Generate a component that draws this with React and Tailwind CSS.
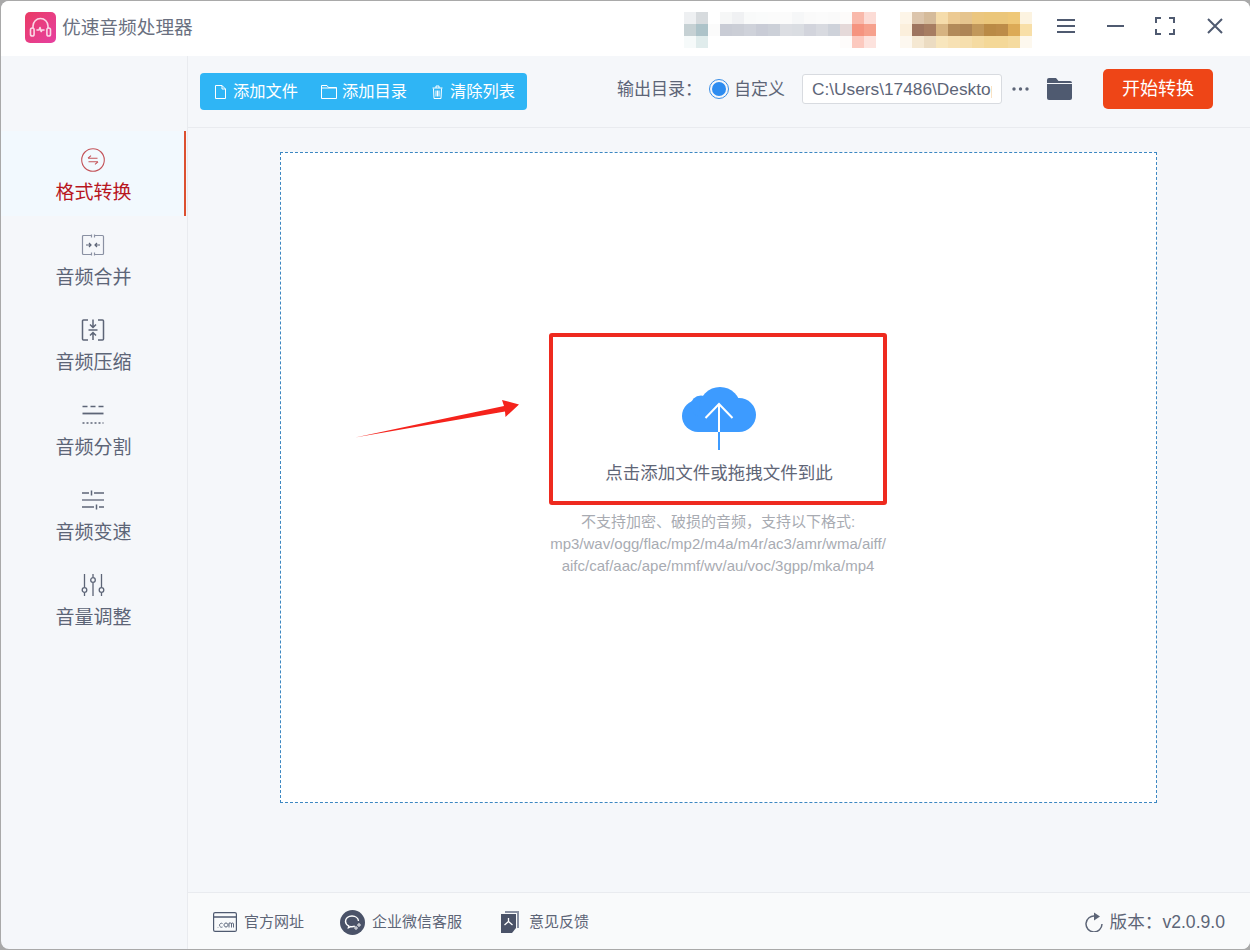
import React from "react";

const mosaic = [
  "bg-[#eef0f2]", "bg-[#d7dbde]", "bg-white", "bg-[#f6f7f7]", "bg-[#f0f1f3]", "bg-[#f9fafa]", "bg-[#fafbfb]", "bg-[#fbfbfb]", "bg-[#fbfbfb]", "bg-[#f6f7f8]", "bg-[#fafafa]", "bg-[#fbfbfb]", "bg-[#fafafa]", "bg-[#fdfbfa]", "bg-[#f9b9ab]", "bg-[#fcdcd6]", "bg-white", "bg-white", "bg-[#fdf5e8]", "bg-[#dcc5ac]", "bg-[#d5bb9b]", "bg-[#f5dcab]", "bg-[#ecca93]", "bg-[#e5c48e]", "bg-[#ebc67f]", "bg-[#ebc67a]", "bg-[#ebc67a]", "bg-[#efc878]", "bg-[#fcf3e0]",
  "bg-[#c6d1d4]", "bg-[#adc3c9]", "bg-[#fbfbfb]", "bg-[#c9ccd5]", "bg-[#cbced6]", "bg-[#cfd2da]", "bg-[#c9ccd6]", "bg-[#ccd0d8]", "bg-[#dcdee3]", "bg-[#dadde2]", "bg-[#d2d4dc]", "bg-[#d8dae0]", "bg-[#ced2da]", "bg-[#e5d9d9]", "bg-[#f59480]", "bg-[#f6a18d]", "bg-white", "bg-white", "bg-[#fbefdc]", "bg-[#9e7560]", "bg-[#a77d62]", "bg-[#d6b381]", "bg-[#b28a5a]", "bg-[#ae8555]", "bg-[#c2985a]", "bg-[#ba8a45]", "bg-[#bd8c48]", "bg-[#dcaa56]", "bg-[#f8dfa8]",
  "bg-[#f6fafa]", "bg-[#e0ecec]", "bg-white", "bg-white", "bg-white", "bg-white", "bg-white", "bg-white", "bg-white", "bg-white", "bg-white", "bg-white", "bg-white", "bg-[#fefcfb]", "bg-[#fcc9bf]", "bg-[#fde3de]", "bg-white", "bg-white", "bg-[#fdf8f0]", "bg-[#f5e8d2]", "bg-[#ecdcc2]", "bg-[#f8e6bd]", "bg-[#f7e1b4]", "bg-[#f6dfae]", "bg-[#f5dba2]", "bg-[#f4d898]", "bg-[#f4d898]", "bg-[#f5dba0]", "bg-[#fdf8ee]",
];

const Logo = () => (
  <div className="w-[31px] h-[31px] rounded-[5px] bg-gradient-to-br from-[#ea3a64] to-[#e63fa0] flex items-center justify-center">
    <svg width="25" height="25" viewBox="0 0 25 25" fill="none" stroke="#fbd7e6" strokeWidth="1.6" strokeLinecap="round" strokeLinejoin="round">
      <path d="M5 13V11a7.5 7.5 0 0 1 15 0v2" />
      <rect x="2.5" y="13" width="3.6" height="8" rx="1.8" />
      <rect x="18.9" y="13" width="3.6" height="8" rx="1.8" />
      <path d="M9 15h2l1-2.5 1.2 4 .8-1.5h2" />
    </svg>
  </div>
);

const FormatIcon = () => (
  <svg width="24" height="24" viewBox="0 0 24 24" fill="none" stroke="#c4545a" strokeWidth="1.1">
    <circle cx="12" cy="12" r="11.3" />
    <path d="M7 10.2h9.5M7 10.2l3-2.6M17 13.8H7.5M17 13.8l-3 2.6" />
  </svg>
);

const MergeIcon = () => (
  <svg width="24" height="24" viewBox="0 0 24 24" fill="none" stroke="#8a91a3" strokeWidth="1.2">
    <path d="M10 2.5H2.5a1 1 0 0 0-1 1v17a1 1 0 0 0 1 1H10M14 2.5h7.5a1 1 0 0 1 1 1v17a1 1 0 0 1-1 1H14M10.5 1.5v3M13.5 1.5v3M10.5 19.5v3M13.5 19.5v3" />
    <path d="M5 12h5M8 10l2 2-2 2M19 12h-5M16 10l-2 2 2 2" stroke="#5d6577" />
  </svg>
);

const CompressIcon = () => (
  <svg width="24" height="24" viewBox="0 0 24 24" fill="none" stroke="#5d6577" strokeWidth="1.5">
    <path d="M7 2H2.500a1 1 0 0 0-1 1v18a1 1 0 0 0 1 1H7M17 2h4.500a1 1 0 0 1 1 1v18a1 1 0 0 1-1 1H17" />
    <path d="M12 1.500v7.500M9 6.500l3 3 3-3M7.500 12h9M12 22v-7.500M9 17.500l3-3 3 3" />
  </svg>
);

const SplitIcon = () => (
  <svg width="24" height="24" viewBox="0 0 24 24" fill="none" stroke="#5d6577">
    <path d="M1.500 3.500h5M9.500 3.500h5M17.500 3.500h5" strokeWidth="1.500" />
    <path d="M1.500 10.500h21" strokeWidth="1.800" />
    <path d="M1.500 20h21" strokeWidth="1.500" strokeDasharray="2 2" />
  </svg>
);

const SpeedIcon = () => (
  <svg width="24" height="24" viewBox="0 0 24 24" fill="none" stroke="#5d6577" strokeWidth="1.500">
    <path d="M1 5h7M13 5h10M10.500 2.500v5" />
    <path d="M1 12h22" strokeWidth="1.300" />
    <path d="M1 19h12M18 19h5M15.500 16.500v5" />
  </svg>
);

const VolumeIcon = () => (
  <svg width="24" height="24" viewBox="0 0 24 24" fill="none" stroke="#5d6577" strokeWidth="1.3">
    <path d="M3.500 1v13M3.500 20v3" />
    <circle cx="3.500" cy="17" r="2.300" />
    <path d="M12 1v3M12 10v13" />
    <circle cx="12" cy="7" r="2.300" />
    <path d="M20.500 1v13M20.500 20v3" />
    <circle cx="20.500" cy="17" r="2.300" />
  </svg>
);

const navItems = [
  { label: "格式转换", icon: <FormatIcon />, active: true },
  { label: "音频合并", icon: <MergeIcon /> },
  { label: "音频压缩", icon: <CompressIcon /> },
  { label: "音频分割", icon: <SplitIcon /> },
  { label: "音频变速", icon: <SpeedIcon /> },
  { label: "音量调整", icon: <VolumeIcon /> },
];

const NavItem = ({ label, icon, active }) => (
  <div
    className={
      active
        ? "w-[185px] h-[85px] pt-[17px] flex flex-col items-center bg-[#f2f9fe] border-r-2 border-[#dc5030] text-[#b8161e]"
        : "w-[185px] h-[85px] pt-[17px] flex flex-col items-center border-r-2 border-transparent text-[#5d6577]"
    }
  >
    {icon}
    <div className="mt-[9px] pl-[2px] text-[19px] leading-6 whitespace-nowrap">{label}</div>
  </div>
);

const TitleBar = () => (
  <div className="h-[55px] shrink-0 bg-white flex items-center pl-[24px] pr-[27px]">
    <div className="-mt-[2px]"><Logo /></div>
    <div className="ml-[6px] text-[18.700px] text-[#6a7080] whitespace-nowrap">优速音频处理器</div>
    <div className="ml-auto mt-[3px] grid grid-cols-[repeat(29,12px)] auto-rows-[12px]">
      {mosaic.map((c, i) => (
        <div key={i} className={c} />
      ))}
    </div>
    <div className="ml-[25px] -mt-[5px] flex items-center text-[#4f5a70]">
      <svg width="18" height="14" viewBox="0 0 18 14" stroke="currentColor" strokeWidth="2">
        <path d="M0 1h18M0 7h18M0 13h18" />
      </svg>
      <svg className="ml-[32px]" width="17" height="14" viewBox="0 0 17 14" stroke="currentColor" strokeWidth="2">
        <path d="M0 7h17" />
      </svg>
      <svg className="ml-[31px]" width="20" height="18" viewBox="0 0 20 18" fill="none" stroke="currentColor" strokeWidth="2">
        <path d="M1 6V1h5M14 1h5v5M19 12v5h-5M6 17H1v-5" />
      </svg>
      <svg className="ml-[32px]" width="16" height="16" viewBox="0 0 16 16" stroke="currentColor" strokeWidth="2">
        <path d="M1 1l14 14M15 1L1 15" />
      </svg>
    </div>
  </div>
);

const Toolbar = () => (
  <div className="h-[72px] shrink-0 flex items-start border-b border-[#e9ebef] pl-[12px] pr-[37px]">
    <div className="mt-[17px] w-[327px] h-[37px] bg-[#2fb5f5] rounded-[4px] flex items-center pl-[15px] text-[16.250px] text-white whitespace-nowrap">
      <svg width="11" height="14" viewBox="0 0 11 14" fill="none" stroke="#fff" strokeWidth="1">
        <path d="M.5.500h6.500l3.500 3.500v9.500H.5zM7 .5V4h3.500" />
      </svg>
      <span className="ml-[7px]">添加文件</span>
      <svg className="ml-[23px]" width="16" height="14" viewBox="0 0 16 14" fill="none" stroke="#fff" strokeWidth="1">
        <path d="M.5 13.500V.5h5.500l1.500 2h8v11zM.5 3h15" />
      </svg>
      <span className="ml-[5px]">添加目录</span>
      <svg className="ml-[25px]" width="11" height="14" viewBox="0 0 11 14" fill="none" stroke="#fff" strokeWidth="1">
        <path d="M.5 3h10M4 3V1h3v2M1.500 3.500l.5 10h7l.5-10M4 5.500v6M5.500 5.500v6M7 5.500v6" />
      </svg>
      <span className="ml-[7px]">清除列表</span>
    </div>
    <div className="ml-auto mt-[13px] h-[40px] flex items-center text-[#5d6577] whitespace-nowrap">
      <span className="w-[80px] mt-px text-[17px]">输出目录：</span>
      <span className="ml-[12px] w-[20px] h-[20px] rounded-full border border-[#3a8ee6] flex items-center justify-center">
        <span className="w-[14px] h-[14px] rounded-full bg-[#2d8cf0]" />
      </span>
      <span className="ml-[5px] w-[53px] mt-px text-[17px]">自定义</span>
      <input
        readOnly
        value="C:\Users\17486\Desktop"
        className="ml-[15px] w-[200px] h-[30px] px-[9px] bg-white border border-[#d8dbe0] rounded-[3px] text-[17.300px] text-[#5d6577] outline-none"
      />
      <svg className="ml-[9px]" width="19" height="6" viewBox="0 0 19 6" fill="#5d6577">
        <circle cx="3" cy="3" r="1.700" />
        <circle cx="9.500" cy="3" r="1.700" />
        <circle cx="16" cy="3" r="1.700" />
      </svg>
      <svg className="ml-[17px]" width="25" height="22" viewBox="0 0 25 22" fill="#4f5a70">
        <path d="M0 2a2 2 0 0 1 2-2h7l2.500 3H23a2 2 0 0 1 2 2H0z" />
        <path d="M0 6h25v14a2 2 0 0 1-2 2H2a2 2 0 0 1-2-2z" />
      </svg>
      <button className="ml-[31px] w-[110px] h-[40px] rounded-[5px] bg-[#ee4517] text-white text-[18px]">开始转换</button>
    </div>
  </div>
);

const Cloud = () => (
  <svg width="74" height="63" viewBox="0 0 74 63">
    <g fill="#3d9bff">
      <circle cx="16" cy="29" r="16" />
      <circle cx="19" cy="19" r="10.500" />
      <circle cx="38" cy="21" r="21" />
      <circle cx="57" cy="28" r="17" />
      <rect x="16" y="25" width="41" height="20" />
    </g>
    <path d="M37 17v28" stroke="#fff" strokeWidth="2" />
    <path d="M37 45v18" stroke="#3d9bff" strokeWidth="2" />
    <path d="M23.500 31L37 17l13.500 14" fill="none" stroke="#fff" strokeWidth="2" />
  </svg>
);

const DropZone = () => (
  <div className="relative h-full bg-white border border-dashed border-[#3c87c2] pt-[180px] pr-px flex flex-col items-center">
    <svg className="absolute left-[74px] top-[246px]" width="165" height="40" viewBox="0 0 165 40">
      <path d="M0 38.500L149 7 147 1l17 4.500L150.500 18 150 12.500z" fill="#f5231c" />
    </svg>
    <div className="w-[338px] h-[172px] border-4 border-[#ee2a1f] rounded-[3px] pt-[50px] pl-[2px] flex flex-col items-center">
      <Cloud />
      <div className="mt-[11px] text-[17.500px] leading-6 text-[#5f6677] whitespace-nowrap">点击添加文件或拖拽文件到此</div>
    </div>
    <div className="mt-[6px] text-[15px] leading-[22px] text-[#a8abb2] text-center whitespace-nowrap">
      <div>不支持加密、破损的音频，支持以下格式:</div>
      <div>mp3/wav/ogg/flac/mp2/m4a/m4r/ac3/amr/wma/aiff/</div>
      <div>aifc/caf/aac/ape/mmf/wv/au/voc/3gpp/mka/mp4</div>
    </div>
  </div>
);

const Footer = () => (
  <div className="h-[57px] shrink-0 bg-[#f9fafb] border-t border-[#e9ebef] flex items-center pt-[2px] pl-[25px] pr-[25px] text-[15px] text-[#5d6577] whitespace-nowrap">
    <svg width="24" height="20" viewBox="0 0 24 20" fill="none" stroke="#4f5a70" strokeWidth="1.200">
      <rect x=".6" y=".6" width="22.800" height="18.800" rx="1.500" />
      <path d="M.6 5h22.800" strokeWidth="1.600" />
      <path d="M5 15.500v-.5M9.500 11.500a2 2 0 1 0 0 3.500M13 11a2 2 0 1 0 .01 0M16 15.500V11l1.500 0a1 1 0 0 1 1 1v3.500M18.500 12a1 1 0 0 1 1-1 1 1 0 0 1 1 1v3.500" strokeWidth=".9" />
    </svg>
    <span className="ml-[7px]">官方网址</span>
    <svg className="ml-[36px]" width="25" height="25" viewBox="0 0 25 25">
      <circle cx="12.500" cy="12.500" r="12.500" fill="#4a5268" />
      <path d="M12 6c-3.800 0-6.500 2.400-6.500 5.300 0 2 1.300 3.700 3.200 4.600l-.3 1.900 2.300-1.200c.4.100.9.100 1.300.1 1 0 2-.2 2.800-.5" fill="none" stroke="#fff" strokeWidth="1.400" />
      <path d="M12 6c3.600 0 6.300 2.200 6.500 5" fill="none" stroke="#fff" strokeWidth="1.400" />
      <circle cx="19" cy="15" r="1.200" fill="none" stroke="#fff" strokeWidth="1" />
      <circle cx="16" cy="18" r="1.200" fill="none" stroke="#fff" strokeWidth="1" />
    </svg>
    <span className="ml-[7px]">企业微信客服</span>
    <svg className="ml-[39px]" width="18" height="22" viewBox="0 0 18 22">
      <path d="M4 0h14v17h-2V2H4z" fill="#8a91a3" />
      <path d="M0 3h15v14l-4 5H0z" fill="#4a5268" />
      <path d="M7.500 7v3.500M7.500 10.500L3.500 14M7.500 10.500l4 3.500" fill="none" stroke="#fff" strokeWidth="1.300" />
    </svg>
    <span className="ml-[10px]">意见反馈</span>
    <div className="ml-auto flex items-center text-[17.600px]">
      <svg width="19" height="20" viewBox="0 0 19 20" fill="none" stroke="#5d6577" strokeWidth="1.500">
        <path d="M11 4a8 8 0 1 0 7 8" />
        <path d="M10 .5l6 4-6 4z" fill="#5d6577" stroke="none" />
      </svg>
      <span className="ml-[7px]">版本：v2.0.9.0</span>
    </div>
  </div>
);

export default function App() {
  return (
    <div className="w-[1250px] h-[950px] overflow-hidden bg-[#a9a9a9] pl-px py-px font-['Liberation_Sans','Noto_Sans_CJK_SC',sans-serif]">
      <div className="h-full rounded-lg overflow-hidden flex flex-col bg-[#f5f7fa]">
        <TitleBar />
        <div className="flex-1 flex min-h-0">
          <aside className="w-[187px] shrink-0 border-r border-[#e9ebef] pt-[75px]">
            {navItems.map((item) => (
              <NavItem key={item.label} {...item} />
            ))}
          </aside>
          <main className="flex-1 flex flex-col min-w-0">
            <Toolbar />
            <div className="flex-1 min-h-0 pl-[92px] pr-[93px] pt-[24px] pb-[89px]">
              <DropZone />
            </div>
            <Footer />
          </main>
        </div>
      </div>
    </div>
  );
}
